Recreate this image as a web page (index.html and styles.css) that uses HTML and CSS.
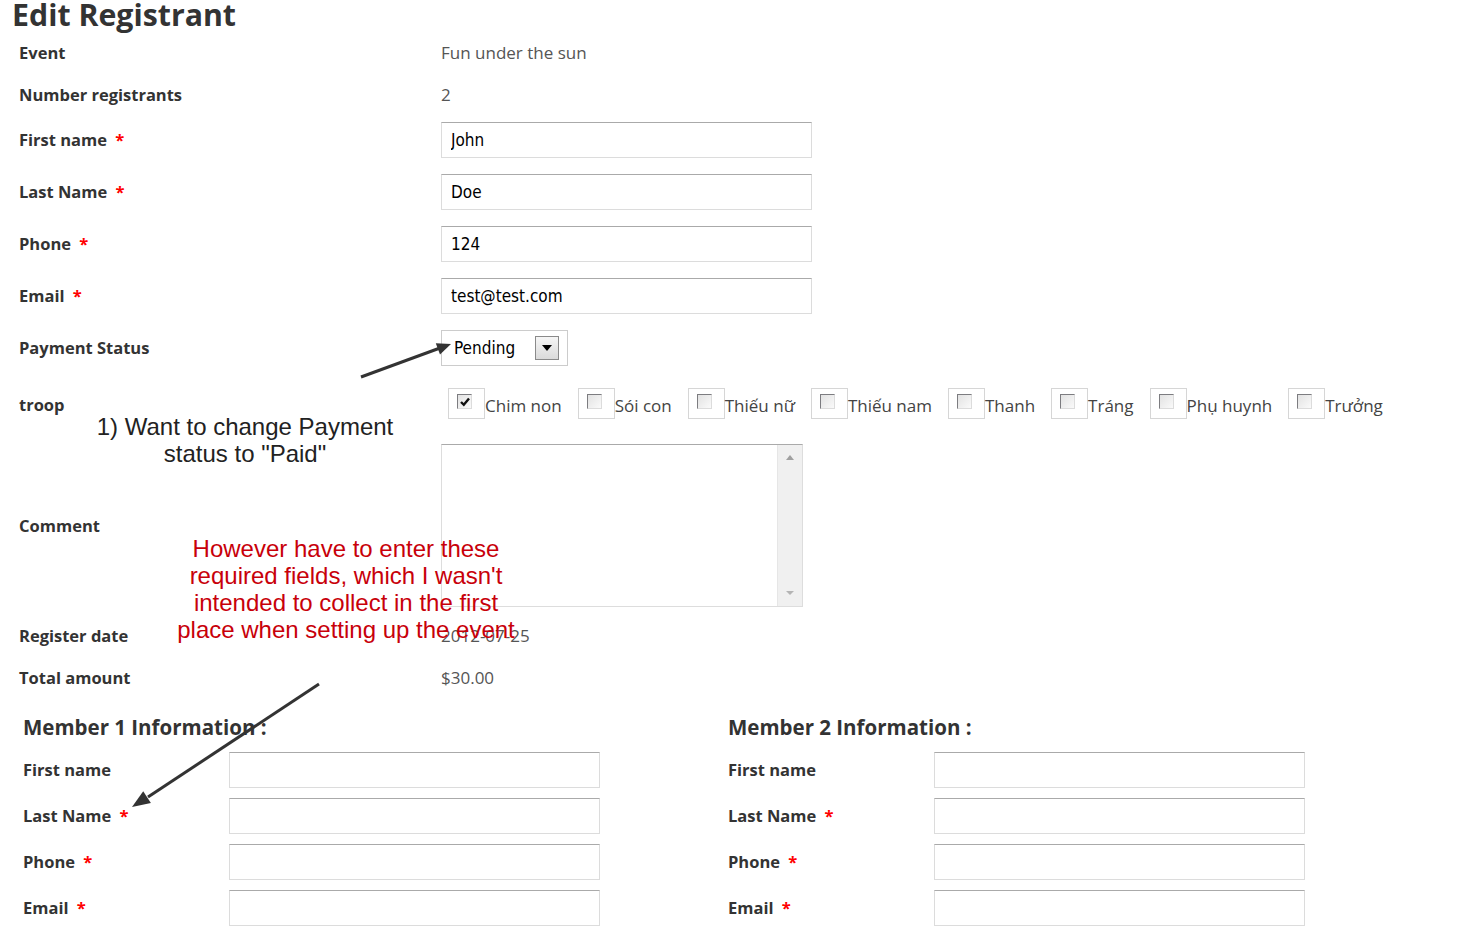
FILE: index.html
```html
<!DOCTYPE html>
<html lang="vi">

<head>
    <meta charset="UTF-8">
    <meta name="viewport" content="width=device-width, initial-scale=1.0">
    <title>Edit Registrant</title>
    <link rel="stylesheet" href="styles.css">
</head>

<body>
    <div class="page">
        <h1 class="title">Edit Registrant</h1>

        <div class="form">
            <div class="label">Event</div>
            <div class="value">Fun under the sun</div>

            <div class="label tight">Number registrants</div>
            <div class="value tight">2</div>

            <div class="label">First name <span class="req">*</span></div>
            <input class="field" type="text" value="John">

            <div class="label">Last Name <span class="req">*</span></div>
            <input class="field" type="text" value="Doe">

            <div class="label">Phone <span class="req">*</span></div>
            <input class="field" type="text" value="124">

            <div class="label">Email <span class="req">*</span></div>
            <input class="field" type="text" value="test@test.com">

            <div class="label">Payment Status</div>
            <div class="select">
                <select>
                    <option>Pending</option>
                    <option>Paid</option>
                </select>
                <span class="select-btn"><span class="select-caret"></span></span>
            </div>

            <div class="label">troop</div>
            <div class="troop-list">
                <label class="troop">
                    <span class="cb-box"><span class="cb">
                        <svg width="12" height="12" viewBox="0 0 12 12">
                            <path d="M2 6 L4.8 8.8 L10 2.5" fill="none" stroke="#111" stroke-width="2.4" />
                        </svg>
                    </span></span>
                    <span class="troop-name">Chim non</span>
                </label>
                <label class="troop">
                    <span class="cb-box"><span class="cb"></span></span>
                    <span class="troop-name">Sói con</span>
                </label>
                <label class="troop">
                    <span class="cb-box"><span class="cb"></span></span>
                    <span class="troop-name">Thiếu nữ</span>
                </label>
                <label class="troop">
                    <span class="cb-box"><span class="cb"></span></span>
                    <span class="troop-name">Thiếu nam</span>
                </label>
                <label class="troop">
                    <span class="cb-box"><span class="cb"></span></span>
                    <span class="troop-name">Thanh</span>
                </label>
                <label class="troop">
                    <span class="cb-box"><span class="cb"></span></span>
                    <span class="troop-name">Tráng</span>
                </label>
                <label class="troop">
                    <span class="cb-box"><span class="cb"></span></span>
                    <span class="troop-name">Phụ huynh</span>
                </label>
                <label class="troop">
                    <span class="cb-box"><span class="cb"></span></span>
                    <span class="troop-name">Trưởng</span>
                </label>
            </div>

            <div class="label">Comment</div>
            <div class="textarea">
                <textarea></textarea>
                <div class="scrollbar">
                    <span class="arrow-up"></span>
                    <span class="arrow-down"></span>
                </div>
            </div>

            <div class="label">Register date</div>
            <div class="value">2012-07-25</div>

            <div class="label">Total amount</div>
            <div class="value">$30.00</div>
        </div>

        <div class="members">
            <div class="member">
                <h3 class="member-title">Member 1 Information :</h3>
                <div class="member-form">
                    <div class="label">First name</div>
                    <input class="field" type="text">
                    <div class="label">Last Name <span class="req">*</span></div>
                    <input class="field" type="text">
                    <div class="label">Phone <span class="req">*</span></div>
                    <input class="field" type="text">
                    <div class="label">Email <span class="req">*</span></div>
                    <input class="field" type="text">
                </div>
            </div>
            <div class="member">
                <h3 class="member-title">Member 2 Information :</h3>
                <div class="member-form">
                    <div class="label">First name</div>
                    <input class="field" type="text">
                    <div class="label">Last Name <span class="req">*</span></div>
                    <input class="field" type="text">
                    <div class="label">Phone <span class="req">*</span></div>
                    <input class="field" type="text">
                    <div class="label">Email <span class="req">*</span></div>
                    <input class="field" type="text">
                </div>
            </div>
        </div>

        <!-- annotations drawn over the form -->
        <div class="note note-payment">1) Want to change Payment<br>status to "Paid"</div>
        <div class="note note-required">However have to enter these<br>required fields, which I wasn't<br>intended to collect in the first<br>place when setting up the event</div>

        <svg class="arrows" width="1480" height="928" viewBox="0 0 1480 928">
            <line x1="361" y1="379" x2="440" y2="350" stroke="#333" stroke-width="3" />
            <polygon points="451,346 440,356.4 435.8,345.2" fill="#333" />
            <line x1="319" y1="686" x2="148" y2="799" stroke="#333" stroke-width="3" />
            <polygon points="132,809 150.9,805 143.2,793.3" fill="#333" />
        </svg>
    </div>
</body>

</html>
```

FILE: styles.css
```css
html,
body {
    margin: 0;
    overflow: hidden;
}

body {
    font-family: "Open Sans", "Noto Sans", sans-serif;
    color: #333;
    background-color: #fff;
}

.page {
    position: relative;
    height: 928px;
    padding: 0 12px;
}

.title {
    margin: -2px 0 0;
    font-size: 30.3px;
    line-height: 34px;
    font-weight: 700;
}

.form {
    display: grid;
    grid-template-columns: 422px 1fr;
    row-gap: 16px;
    align-items: center;
    justify-items: start;
    margin: 8px 0 0 7px;
}

.label {
    font-size: 16.5px;
    font-weight: 700;
    line-height: 26px;
    white-space: nowrap;
}

.value {
    font-size: 17px;
    line-height: 26px;
    color: #555;
}

/* pulls the first input row up a little */
.tight {
    margin-bottom: -2px;
}

.req {
    color: #f00;
    margin-left: 4px;
}

.field {
    box-sizing: border-box;
    width: 371px;
    height: 36px;
    margin: 0;
    padding: 0 9px;
    border: 1px solid #dcdcdc;
    border-top-color: #aaa;
    border-radius: 0;
    font-family: "DejaVu Sans Condensed", "Liberation Sans", sans-serif;
    font-size: 17px;
    color: #000;
    outline: none;
}

/* payment status dropdown */
.select {
    box-sizing: border-box;
    width: 127px;
    height: 36px;
    display: flex;
    align-items: center;
    justify-content: space-between;
    padding: 0 8px 0 12px;
    border: 1px solid #ccc;
}

.select select {
    appearance: none;
    border: none;
    background: none;
    padding: 0;
    font-family: "DejaVu Sans Condensed", "Liberation Sans", sans-serif;
    font-size: 17px;
    color: #000;
    outline: none;
}

.select-btn {
    box-sizing: border-box;
    width: 24px;
    height: 24px;
    display: flex;
    align-items: center;
    justify-content: center;
    border: 1px solid #8a8a8a;
    background: linear-gradient(#f6f6f6, #dadada);
}

.select-caret {
    width: 0;
    height: 0;
    border-left: 5px solid transparent;
    border-right: 5px solid transparent;
    border-top: 6px solid #000;
}

/* troop checkboxes */
.troop-list {
    display: flex;
    gap: 16px;
    margin-left: 7px;
    padding: 6px 0 9px;
}

.troop {
    display: flex;
    align-items: center;
}

.cb-box {
    box-sizing: border-box;
    width: 37px;
    height: 31px;
    padding: 5px 0 0 8px;
    border: 1px solid #d6d6d6;
}

.cb {
    box-sizing: border-box;
    display: flex;
    align-items: center;
    justify-content: center;
    width: 15px;
    height: 15px;
    border: 1px solid #dcdcdc;
    border-top-color: #7c7c80;
    border-left-color: #7c7c80;
    background: linear-gradient(135deg, #e2e2e2, #fafafa);
}

.troop-name {
    font-size: 17px;
    color: #444;
    padding-top: 4px;
    white-space: nowrap;
}

/* comment box */
.textarea {
    box-sizing: border-box;
    width: 362px;
    height: 163px;
    display: flex;
    border: 1px solid #ddd;
    border-top-color: #aaa;
}

.textarea textarea {
    flex: 1;
    border: none;
    resize: none;
    outline: none;
    padding: 4px;
    font-family: "DejaVu Sans Condensed", "Liberation Sans", sans-serif;
}

.scrollbar {
    width: 24px;
    display: flex;
    flex-direction: column;
    justify-content: space-between;
    align-items: center;
    padding: 10px 0 11px;
    background-color: #f0f0f0;
    border-left: 1px solid #e6e6e6;
}

.arrow-up {
    width: 0;
    height: 0;
    border-left: 4px solid transparent;
    border-right: 4px solid transparent;
    border-bottom: 5px solid #a0a0a0;
}

.arrow-down {
    width: 0;
    height: 0;
    border-left: 4px solid transparent;
    border-right: 4px solid transparent;
    border-top: 4px solid #b4b4b4;
}

/* member blocks */
.members {
    display: grid;
    grid-template-columns: 705px 705px;
    margin: 23px 0 0 11px;
}

.member-title {
    margin: 0 0 12px;
    font-size: 20.5px;
    line-height: 26px;
    font-weight: 700;
}

.member-form {
    display: grid;
    grid-template-columns: 206px 371px;
    row-gap: 10px;
    align-items: center;
}

/* screenshot annotations */
.note {
    position: absolute;
    width: 400px;
    font-family: "Liberation Sans", Arial, sans-serif;
    font-size: 24px;
    line-height: 27px;
    text-align: center;
    color: #222;
}

.note-payment {
    left: 45px;
    top: 415px;
}

.note-required {
    left: 146px;
    top: 537px;
    color: #c8000a;
}

.arrows {
    position: absolute;
    left: 0;
    top: 0;
    pointer-events: none;
}
```
